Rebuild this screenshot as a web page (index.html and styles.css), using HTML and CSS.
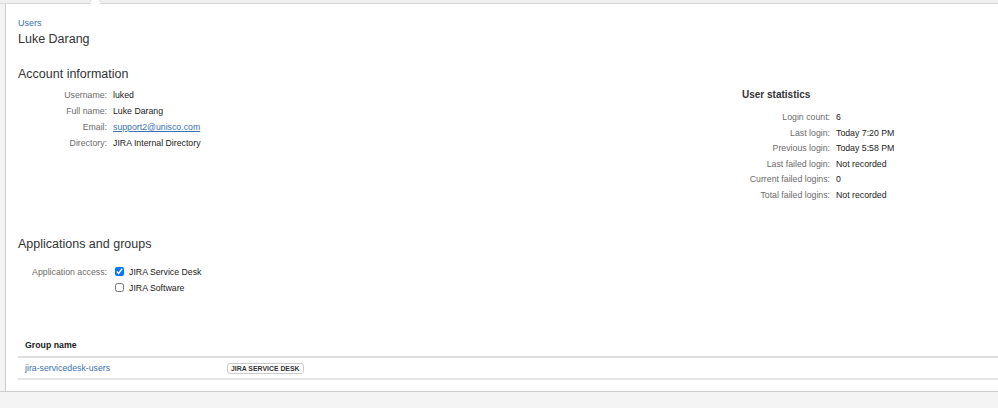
FILE: index.html
```html
<!DOCTYPE html>
<html lang="en">
<head>
    <meta charset="UTF-8">
    <title>Luke Darang - Users</title>
    <link rel="stylesheet" href="styles.css">
</head>
<body>
    <div class="topbar"><span class="notch"></span></div>

    <div class="page">
        <div class="page-header">
            <a class="crumb" href="#">Users</a>
            <h1>Luke Darang</h1>
        </div>

        <div class="account">
            <div class="account-main">
                <h2>Account information</h2>
                <div class="fields">
                    <div class="field"><span class="label">Username:</span><span class="value">luked</span></div>
                    <div class="field"><span class="label">Full name:</span><span class="value">Luke Darang</span></div>
                    <div class="field"><span class="label">Email:</span><span class="value"><a href="#" class="mail">support2@unisco.com</a></span></div>
                    <div class="field"><span class="label">Directory:</span><span class="value">JIRA Internal Directory</span></div>
                </div>
            </div>

            <div class="stats">
                <h3>User statistics</h3>
                <div class="field"><span class="label">Login count:</span><span class="value">6</span></div>
                <div class="field"><span class="label">Last login:</span><span class="value">Today 7:20 PM</span></div>
                <div class="field"><span class="label">Previous login:</span><span class="value">Today 5:58 PM</span></div>
                <div class="field"><span class="label">Last failed login:</span><span class="value">Not recorded</span></div>
                <div class="field"><span class="label">Current failed logins:</span><span class="value">0</span></div>
                <div class="field"><span class="label">Total failed logins:</span><span class="value">Not recorded</span></div>
            </div>
        </div>

        <h2 class="apps-title">Applications and groups</h2>
        <div class="access">
            <span class="label">Application access:</span>
            <div class="apps">
                <label class="app"><input type="checkbox" checked> JIRA Service Desk</label>
                <label class="app"><input type="checkbox"> JIRA Software</label>
            </div>
        </div>

        <table class="groups">
            <thead>
                <tr><th class="col-name">Group name</th><th></th></tr>
            </thead>
            <tbody>
                <tr>
                    <td><a href="#">jira-servicedesk-users</a></td>
                    <td><span class="lozenge">JIRA SERVICE DESK</span></td>
                </tr>
            </tbody>
        </table>
    </div>

    <div class="footer"></div>
</body>
</html>
```

FILE: styles.css
```css
body {
    margin: 0;
    background: #f4f4f4;
    color: #222;
    font-family: "Liberation Sans", Arial, sans-serif;
    font-size: 8.75px;
}

a {
    color: #3b73af;
    text-decoration: none;
}

.topbar {
    height: 3px;
    background: #f0f0f0;
    border-bottom: 1px solid #d8d8d8;
    position: relative;
}

.notch {
    position: absolute;
    left: 91px;
    top: -3px;
    width: 8px;
    height: 8px;
    background: #fff;
    border-left: 1px solid #d8d8d8;
    border-top: 1px solid #d8d8d8;
    transform: rotate(45deg);
}

.page {
    background: #fff;
    margin-left: 5px;
    border-left: 1px solid #ccc;
    height: 387px;
    padding: 0 0 0 12px;
    box-sizing: border-box;
}

.page-header {
    padding-top: 13px;
}

.crumb {
    display: block;
    font-size: 9px;
    line-height: 12px;
}

.page-header h1 {
    margin: 0;
    font-size: 12.5px;
    font-weight: normal;
    line-height: 20px;
    color: #333;
}

h2 {
    margin: 0;
    font-size: 12.5px;
    font-weight: normal;
    line-height: 18px;
    color: #333;
}

.account {
    display: flex;
    margin-top: 16px;
}

.account-main {
    flex: 1;
}

.fields {
    margin-top: 4px;
}

.field {
    display: flex;
    line-height: 16px;
    white-space: nowrap;
}

.label {
    color: #6b6b6b;
    text-align: right;
    width: 89px;
    flex: none;
    padding-right: 6px;
}

.mail {
    text-decoration: underline;
}

.stats {
    width: 256px;
    padding-top: 23px;
}

.stats h3 {
    margin: 0 0 8px;
    font-size: 10px;
    font-weight: bold;
    line-height: 14px;
    color: #333;
}

.stats .field {
    line-height: 15.6px;
}

.stats .label {
    width: 88px;
}

.apps-title {
    margin-top: 31px;
}

.access {
    display: flex;
    margin-top: 11px;
    white-space: nowrap;
}

.access .label {
    padding-right: 8px;
    line-height: 16px;
}

.apps {
    display: flex;
    flex-direction: column;
}

.app {
    display: flex;
    align-items: center;
    height: 16px;
}

.app input {
    margin: 0 5px 0 0;
    width: 9px;
    height: 9px;
}

.groups {
    width: 100%;
    border-collapse: collapse;
    margin-top: 39px;
}

.groups th {
    text-align: left;
    font-weight: bold;
    padding: 3px 7px 4px;
    border-bottom: 2px solid #ddd;
    line-height: 14px;
}

.groups .col-name {
    width: 188px;
}

.groups td {
    padding: 3px 7px;
    border-bottom: 2px solid #e6e6e6;
    line-height: 14px;
}

.lozenge {
    display: inline-block;
    border: 1px solid #ccc;
    border-radius: 3px;
    font-size: 6.9px;
    font-weight: bold;
    line-height: 9px;
    padding: 0 3px;
    color: #333;
}

.footer {
    border-top: 1px solid #ccc;
    height: 16px;
}
```
